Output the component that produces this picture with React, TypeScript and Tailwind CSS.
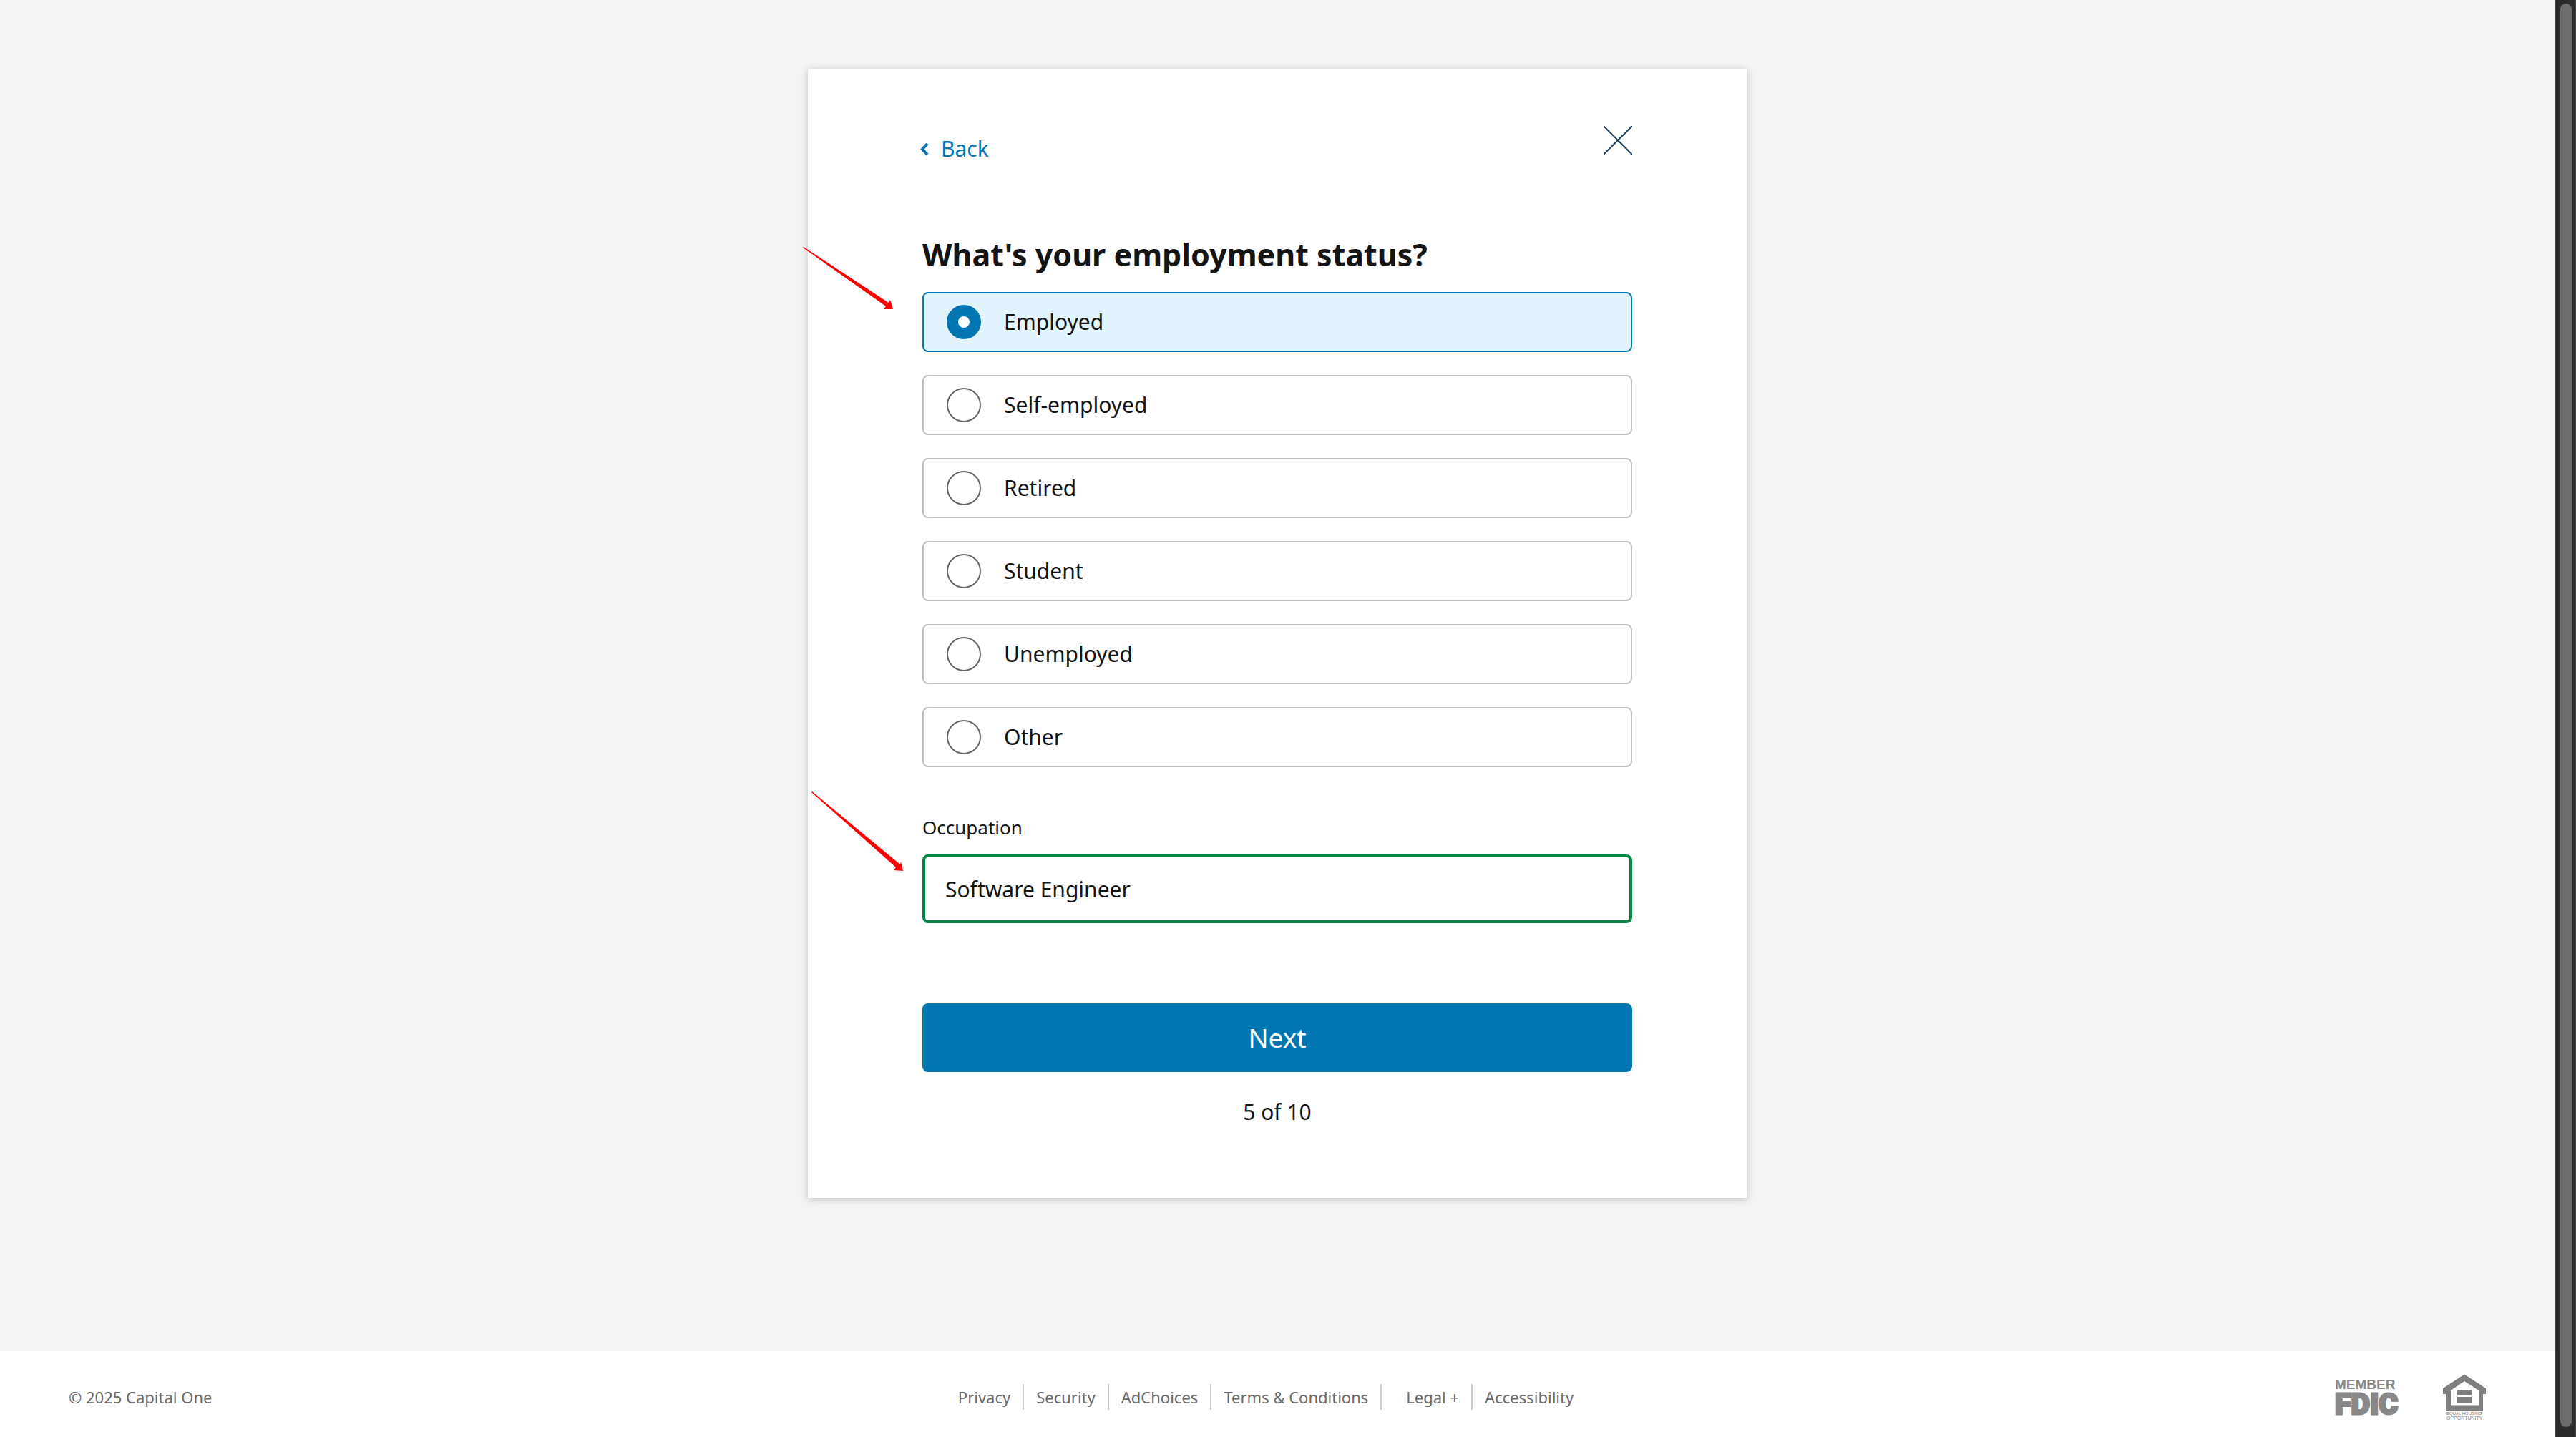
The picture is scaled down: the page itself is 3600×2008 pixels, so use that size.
import { useState } from 'react';

const STATUSES = ['Employed', 'Self-employed', 'Retired', 'Student', 'Unemployed', 'Other'];

const LINKS = [
  { label: 'Privacy', className: 'px-[17px]' },
  { label: 'Security', className: 'px-[17px]' },
  { label: 'AdChoices', className: 'px-[17px]' },
  { label: 'Terms & Conditions', className: 'px-[17px]' },
  { label: 'Legal +', className: 'pr-[17px] pl-[34px]' },
  { label: 'Accessibility', className: 'px-[17px]' },
];

function Arrow({ className, points }: { className: string; points: string }) {
  return (
    <svg className={className} width="130" height="116" viewBox="0 0 130 116" aria-hidden="true">
      <polygon points={points} fill="#ff0000" />
    </svg>
  );
}

function StatusOption({ label, checked, onSelect }: { label: string; checked: boolean; onSelect: () => void }) {
  return (
    <label
      className={
        checked
          ? 'flex h-[84px] items-center gap-8 rounded-lg border-2 border-[#0b76ab] bg-[#e1f3fd] px-8'
          : 'flex h-[84px] items-center gap-8 rounded-lg border-2 border-[#c0c0c0] bg-white px-8'
      }
    >
      <input
        type="radio"
        name="employment-status"
        checked={checked}
        onChange={onSelect}
        className="size-12 shrink-0 appearance-none rounded-full border-2 border-[#666666] bg-white checked:border-[16px] checked:border-[#0276b1]"
      />
      <span>{label}</span>
    </label>
  );
}

function FdicLogo() {
  return (
    <svg width="86" height="52" viewBox="0 0 86 52" role="img" aria-label="Member FDIC" fill="#888888" className="overflow-visible">
      <text x="-1" y="15" fontFamily="Liberation Sans, sans-serif" fontWeight="700" fontSize="19">MEMBER</text>
      <text x="-1" y="50" fontFamily="Roboto, sans-serif" fontWeight="900" fontSize="41" stroke="#888888" strokeWidth="3">FDIC</text>
    </svg>
  );
}

function EqualHousingLogo() {
  return (
    <svg width="60" height="64" viewBox="0 0 60 64" role="img" aria-label="Equal Housing Opportunity" fill="#7f7f7f" className="overflow-visible">
      <path
        fillRule="evenodd"
        d="M30 0.5 60 20V28H56V51H4V28H0V20ZM30 10 11 23V43.5H50V23Z"
      />
      <path d="M20 22H40V30H20ZM20 32H40V40H20Z" />
      <text x="5" y="57" fontFamily="Liberation Sans, sans-serif" fontSize="6">EQUAL HOUSING</text>
      <text x="5" y="64" fontFamily="Liberation Sans, sans-serif" fontSize="7">OPPORTUNITY</text>
    </svg>
  );
}

export default function App() {
  const [status, setStatus] = useState('Employed');
  const [occupation, setOccupation] = useState('Software Engineer');

  return (
    <div className="flex min-h-screen bg-[#f4f4f4] font-['Noto_Sans',sans-serif] text-[30px] leading-10 text-[#141414]">
      <div className="flex min-w-0 flex-1 flex-col">
        <main className="flex flex-1 flex-col items-center pt-24">
          <form
            className="relative w-full max-w-[1312px] bg-white px-40 pt-20 pb-25 shadow-[0_2px_10px_rgba(0,0,0,0.22)]"
            onSubmit={(e) => e.preventDefault()}
          >
            <div className="flex items-start justify-between">
              <button type="button" className="flex items-center gap-4 pt-3 text-[#0276b1]">
                <svg width="10" height="18" viewBox="0 0 10 18" fill="none" stroke="currentColor" strokeWidth="4" aria-hidden="true" className="overflow-visible">
                  <path d="M7 2 0 9.500 7 17" />
                </svg>
                Back
              </button>
              <button type="button" aria-label="Close">
                <svg width="40" height="40" viewBox="0 0 40 40" fill="none" stroke="#1d3f5c" strokeWidth="2" aria-hidden="true">
                  <path d="M0 0 40 40M40 0 0 40" />
                </svg>
              </button>
            </div>

            <h1 id="status-heading" className="mt-24 text-[43px] leading-16 font-bold">
              What's your employment status?
            </h1>
            <div role="radiogroup" aria-labelledby="status-heading" className="mt-5 flex flex-col gap-8">
              {STATUSES.map((label) => (
                <StatusOption key={label} label={label} checked={status === label} onSelect={() => setStatus(label)} />
              ))}
            </div>

            <label htmlFor="occupation" className="mt-16 block text-[26px] leading-10">
              Occupation
            </label>
            <input
              id="occupation"
              type="text"
              value={occupation}
              onChange={(e) => setOccupation(e.target.value)}
              className="mt-[18px] block h-24 w-full rounded-lg border-4 border-[#058443] bg-white px-7 outline-none"
            />

            <button type="submit" className="mt-28 block h-24 w-full rounded-lg bg-[#0276b1] text-[37px] text-white">
              Next
            </button>
            <p className="mt-9 text-center">5 of 10</p>

            <Arrow className="absolute top-[248px] -left-2" points="1,2 2,1 121,79 123,75 127,88 114,88 117,84" />
            <Arrow className="absolute top-[1008px] left-1" points="1,3 2,2 125,104 126,100 129,113 116,112 119,108" />
          </form>
        </main>

        <footer className="grid h-30 grid-cols-[1fr_auto_1fr] items-center bg-white px-24 pt-2 text-[22px] leading-9 text-[#6a6a6a]">
          <p>© 2025 Capital One</p>
          <nav className="flex divide-x-2 divide-[#cccccc] pr-8">
            {LINKS.map(({ label, className }) => (
              <a key={label} href="#" className={className}>
                {label}
              </a>
            ))}
          </nav>
          <div className="flex items-center justify-end gap-16">
            <FdicLogo />
            <EqualHousingLogo />
          </div>
        </footer>
      </div>

      <div aria-hidden="true" className="flex w-[30px] shrink-0 border-x-2 border-[#404040] bg-[#2b2b2b] pt-[5px] pr-1 pb-[14px] pl-1.5">
        <div className="flex-1 rounded-full bg-[#6c6c6c]" />
      </div>
    </div>
  );
}
